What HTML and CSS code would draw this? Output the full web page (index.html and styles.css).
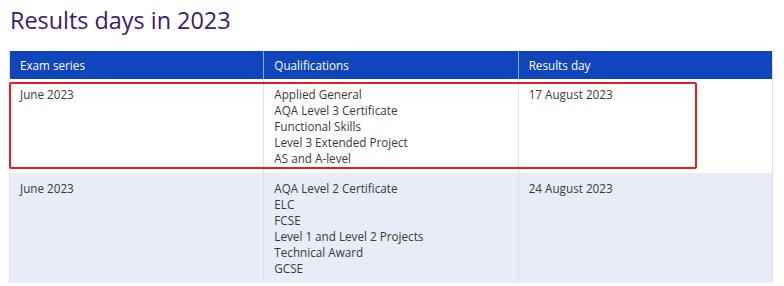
FILE: index.html
```html
<!DOCTYPE html>
<html lang="en">
<head>
<meta charset="utf-8">
<title>Results days in 2023</title>
<link rel="stylesheet" href="styles.css">
</head>
<body>
<h2 class="title">Results days in 2023</h2>
<div class="table-wrap">
  <table class="results">
    <thead>
      <tr><th>Exam series</th><th>Qualifications</th><th>Results day</th></tr>
    </thead>
    <tbody>
      <tr>
        <td>June 2023</td>
        <td>Applied General<br>AQA Level 3 Certificate<br>Functional Skills<br>Level 3 Extended Project<br>AS and A-level</td>
        <td>17 August 2023</td>
      </tr>
      <tr class="alt">
        <td>June 2023</td>
        <td>AQA Level 2 Certificate<br>ELC<br>FCSE<br>Level 1 and Level 2 Projects<br>Technical Award<br>GCSE</td>
        <td>24 August 2023</td>
      </tr>
    </tbody>
  </table>
  <div class="highlight"></div>
</div>
</body>
</html>
```
FILE: styles.css
```css
html, body { margin: 0; padding: 0; background: #fff; }
body { font-family: "Open Sans", "Noto Sans", sans-serif; color: #333; overflow: hidden; }
.title {
  margin: 0;
  padding: 3px 0 0 10px;
  font-size: 23.4px;
  font-weight: 400;
  line-height: 34px;
  color: #3b1a78;
}
.table-wrap { position: relative; margin: 14px 0 0 9px; width: 764px; }
.results {
  width: 100%;
  border-collapse: collapse;
  table-layout: fixed;
  font-size: 11.7px;
  line-height: 16px;
  border-left: 1px solid #dcdfe6;
  border-right: 1px solid #dcdfe6;
}
.results th {
  background: #1046bd;
  color: #fff;
  font-weight: 400;
  text-align: left;
  padding: 6px 10px;
  height: 16px;
  border-left: 1px solid #8ea3de;
}
.results th:first-child { border-left: none; }
.results td {
  vertical-align: top;
  padding: 7px 10px;
  border-left: 1px solid #dcdfe6;
  color: #3a3a3a;
}
.results td:first-child { border-left: none; }
.results tr.alt td { background: #e8ecf6; }
.highlight {
  position: absolute;
  left: 0;
  top: 31px;
  width: 684px;
  height: 83px;
  border: 2px solid #f01818;
  border-radius: 2px;
}
```
